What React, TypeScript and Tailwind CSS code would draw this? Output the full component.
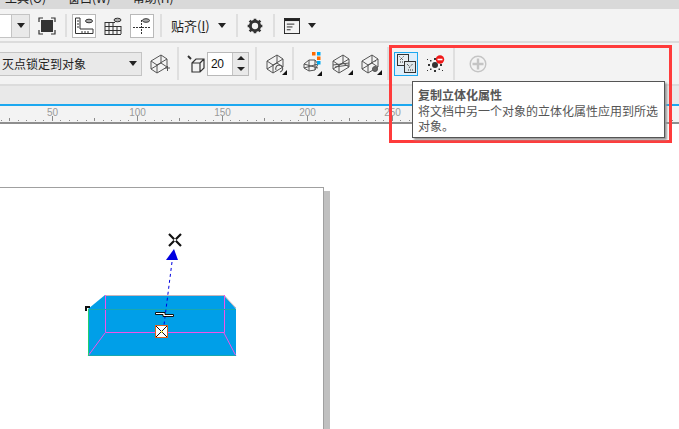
const font = { fontFamily: '"Noto Sans CJK SC", "Liberation Sans", sans-serif' };

function Sep({ tall }: { tall?: boolean }) {
  return <div className={`${tall ? 'h-[33px]' : 'h-[23px]'} w-[2px] shrink-0 bg-[#dfdfdf]`} />;
}

function Arrow({ className = '' }: { className?: string }) {
  return <div className={`h-0 w-0 border-x-[4px] border-t-[5px] border-x-transparent border-t-[#222] ${className}`} />;
}

function Cube({ corner, children }: { corner?: boolean; children?: React.ReactNode }) {
  return (
    <svg width="22" height="24" viewBox="0 0 22 24" className="shrink-0" fill="none" stroke="#555" strokeWidth="1">
      <path d="M1 9 L11 3 L17 7 L17 15 L7 21 L1 17 Z M1 9 L7 13 L17 7 M7 13 L7 21 M1 17 L11 11 L17 15 M11 3 L11 11" />
      {children}
      {corner && <path d="M21 18 L21 23 L16 23 Z" fill="#111" stroke="none" />}
    </svg>
  );
}

function Toolbar1() {
  return (
    <div className="flex h-[34px] items-center border-b-2 border-[#dcdcdc] bg-[#f3f3f3] pt-[1px]">
      <div className="flex h-[24px] w-[30px] shrink-0 border border-l-0 border-[#c4c4c4]">
        <div className="w-[11px] bg-white" />
        <div className="flex flex-1 items-center justify-center border-l border-[#c4c4c4] bg-[#e9e9e9]">
          <Arrow />
        </div>
      </div>
      <svg width="18" height="18" viewBox="0 0 18 18" className="ml-[8px] shrink-0" fill="none" stroke="#333" strokeWidth="1.2">
        <rect x="3" y="3" width="12" height="12" fill="#333" stroke="none" />
        <path d="M1 5 V1 H5 M13 1 H17 V5 M17 13 V17 H13 M5 17 H1 V13" />
      </svg>
      <div className="ml-[9px]"><Sep /></div>
      <div className="ml-[5px] flex h-[24px] w-[24px] shrink-0 items-center justify-center border border-[#b9b9b9] bg-white">
        <svg width="20" height="18" viewBox="0 0 20 18" fill="none" stroke="#333">
          <path d="M1.5 1 V16.5 H19 V12 H6 V1 Z" />
          <path d="M3 4 H5 M3 7 H5 M3 10 H5 M8 14 V16 M11 14 V16 M14 14 V16" />
          <ellipse cx="15" cy="4" rx="3.5" ry="1.8" fill="#aaa" />
        </svg>
      </div>
      <svg width="18" height="18" viewBox="0 0 18 18" className="ml-[8px] shrink-0" fill="none" stroke="#333">
        <path d="M1 5.5 H11 M1 9.5 H17 M1 13.5 H17 M0.5 17.5 H17 M1 5 V17 M5 5 V17 M9 5 V17 M13 9 V17 M17 9 V17" />
        <ellipse cx="13.5" cy="3" rx="3.5" ry="1.8" fill="#aaa" />
      </svg>
      <div className="ml-[8px] flex h-[24px] w-[24px] shrink-0 items-center justify-center border border-[#b9b9b9] bg-white">
        <svg width="20" height="18" viewBox="0 0 20 18" fill="none" stroke="#333" strokeDasharray="2 1">
          <path d="M1 10.5 H18 M9.5 3 V18" />
          <ellipse cx="14" cy="3.5" rx="3.5" ry="1.8" fill="#aaa" strokeDasharray="none" />
        </svg>
      </div>
      <div className="ml-[6px]"><Sep /></div>
      <span className="ml-[9px] w-[42px] shrink-0 text-[13px] leading-none text-[#222]">
        贴齐(<span className="underline">I</span>)
      </span>
      <Arrow className="ml-[5px] shrink-0" />
      <div className="ml-[10px]"><Sep /></div>
      <svg width="16" height="18" viewBox="0 0 24 26" className="ml-[9px] shrink-0" fill="none" stroke="#333" strokeWidth="4.5">
        <circle cx="12" cy="13" r="7" />
        <path d="M12 2 V6 M12 20 V24 M1 13 H5 M19 13 H23 M4 5 L7 8 M17 18 L20 21 M20 5 L17 8 M7 18 L4 21" strokeWidth="4" />
      </svg>
      <div className="ml-[10px]"><Sep /></div>
      <svg width="16" height="16" viewBox="0 0 17 17" className="ml-[9px] shrink-0" fill="none" stroke="#222">
        <rect x="0.5" y="0.5" width="16" height="16" />
        <path d="M1 2 H16" strokeWidth="2.5" />
        <path d="M3 6.5 H11 M3 9.5 H9 M3 12.5 H7" />
      </svg>
      <Arrow className="ml-[8px] shrink-0" />
    </div>
  );
}

function Toolbar2() {
  return (
    <div className="flex h-[43px] items-center border-b-2 border-[#dcdcdc] bg-[#f3f3f3]">
      <div className="flex h-[24px] w-[142px] shrink-0 items-center justify-between border border-l-0 border-[#c4c4c4] bg-[#e9e9e9] pl-[2px] pr-[4px]">
        <span className="text-[12px] leading-none text-[#222]">灭点锁定到对象</span>
        <Arrow />
      </div>
      <div className="ml-[8px]">
        <Cube>
          <path d="M15 16 H20 M17.5 14 V19" strokeWidth="1" />
        </Cube>
      </div>
      <div className="ml-[5px]"><Sep tall /></div>
      <svg width="18" height="20" viewBox="0 0 18 20" className="ml-[8px] shrink-0" fill="none" stroke="#333" strokeWidth="1.2">
        <path d="M5 9 L9 5 H17 V14 L13 18 H5 Z M5 9 H13 V18 M13 9 L17 5" />
        <path d="M1 2 L4 5" strokeWidth="2" />
      </svg>
      <div className="ml-[2px] flex h-[24px] w-[42px] shrink-0 border border-[#b9b9b9]">
        <div
          className="flex w-[24px] items-center bg-white pl-[3px] text-[12px] leading-none tracking-[-0.5px] text-[#111]"
          style={{ fontFamily: '"Liberation Sans", sans-serif' }}
        >
          20
        </div>
        <div className="flex flex-1 flex-col items-center justify-center gap-[7px] border-l border-[#c4c4c4] bg-[#e9e9e9]">
          <div className="h-0 w-0 border-x-[4px] border-b-[4px] border-x-transparent border-b-[#222]" />
          <div className="h-0 w-0 border-x-[4px] border-t-[4px] border-x-transparent border-t-[#222]" />
        </div>
      </div>
      <div className="ml-[6px]"><Sep tall /></div>
      <div className="ml-[9px]">
        <Cube corner>
          <path d="M10 18 A3.5 3.5 0 1 1 14 20" strokeWidth="1.1" />
        </Cube>
      </div>
      <div className="ml-[4px]"><Sep tall /></div>
      <svg width="24" height="25" viewBox="0 0 24 25" className="ml-[8px] shrink-0" fill="none" stroke="#555" strokeWidth="1">
        <path d="M2 13 L7 9 L13 9 L16 13 L13 19 L7 20 L2 17 Z M2 13 L16 17 M7 9 L7 20 M13 9 L13 19 M2 17 L16 13" />
        <rect x="10" y="1" width="3.5" height="3.5" fill="#ff6a00" stroke="none" />
        <rect x="15" y="1" width="3.5" height="3.5" fill="#00a9f0" stroke="none" />
        <rect x="15" y="5.5" width="3.5" height="3.5" fill="#ff6a00" stroke="none" />
        <rect x="15" y="10" width="3.5" height="3.5" fill="#00a9f0" stroke="none" />
        <path d="M20 20 L20 25 L15 25 Z" fill="#111" stroke="none" />
      </svg>
      <div className="ml-[6px]">
        <Cube corner>
          <path d="M1 13 L17 11 M3 15 L17 13" strokeWidth="1" />
        </Cube>
      </div>
      <div className="ml-[7px]">
        <Cube corner>
          <circle cx="14" cy="17" r="2.5" fill="#666" />
          <path d="M11 10 V12 M14 9 V11" strokeDasharray="1 1" />
        </Cube>
      </div>
      <div className="ml-[4px]"><Sep tall /></div>
      <div className="ml-[5px] flex h-[24px] w-[24px] shrink-0 items-center justify-center border border-[#1ca8f0] bg-[#ddeefb]">
        <svg width="19" height="19" viewBox="0 0 19 19" fill="none" stroke="#333">
          <rect x="0.5" y="0.5" width="11" height="11" fill="#e8eef2" />
          <rect x="7.5" y="7.5" width="11" height="11" fill="#dfe6ea" />
          <path d="M2.5 2.5 L6 6 M6.5 2.5 L3 6 M3 8 H6 M10 10 L13 13 M15.5 10 L12 14 M11 16 H16" strokeDasharray="1 1" />
        </svg>
      </div>
      <svg width="18" height="18" viewBox="0 0 18 18" className="ml-[9px] shrink-0">
        <g fill="#333">
          <circle cx="8" cy="10" r="3" />
          <rect x="7" y="3" width="2" height="2" />
          <rect x="7" y="15" width="2" height="2" />
          <rect x="1" y="9" width="2" height="2" />
          <rect x="13" y="9" width="2" height="2" />
          <rect x="3" y="5" width="1.5" height="1.5" />
          <rect x="3" y="13.5" width="1.5" height="1.5" />
          <rect x="11.5" y="13.5" width="1.5" height="1.5" />
          <rect x="0" y="4" width="1" height="1" />
          <rect x="0" y="15" width="1" height="1" />
          <rect x="15" y="15" width="1" height="1" />
        </g>
        <circle cx="13" cy="4.5" r="4.2" fill="#f01818" />
        <rect x="10.5" y="3.7" width="5" height="1.6" fill="#fff" />
      </svg>
      <div className="ml-[8px]"><Sep tall /></div>
      <svg width="18" height="18" viewBox="0 0 18 18" className="ml-[14px] shrink-0" fill="none" stroke="#c4c4c4">
        <circle cx="9" cy="9" r="7.8" strokeWidth="1.4" />
        <path d="M9 3.5 V14.5 M3.5 9 H14.5" strokeWidth="2.4" />
      </svg>
    </div>
  );
}

function Ruler() {
  // one tick every 8.5px, a long one every 50 units
  const ticks = Array.from({ length: 80 }, (_, i) => i);
  const labels = ['50', '100', '150', '200', '250'];
  return (
    <div className="relative h-[18px] border-b-2 border-[#8e8e8e] bg-[#f3f3f3]">
      <div className="flex pl-[10px] pt-[1px]">
        {labels.map((l) => (
          <span
            key={l}
            className="w-[85px] shrink-0 text-center text-[10px] leading-[11px] text-[#999]"
            style={{ fontFamily: '"Liberation Sans", sans-serif' }}
          >
            {l}
          </span>
        ))}
      </div>
      <svg width="679" height="6" className="absolute bottom-0 left-0">
        {ticks.map((i) => {
          const h = i % 10 === 6 ? 5 : i % 5 === 1 ? 3 : 1;
          return <rect key={i} x={Math.round(i * 8.5 + 0.5)} y={5 - h} width="1" height={h} fill="#8a8a8a" />;
        })}
      </svg>
    </div>
  );
}

function ExtrudeObject() {
  return (
    <svg width="160" height="135" viewBox="0 0 160 135" className="absolute left-[82px] top-[230px]">
      <path d="M6 79 L23 65 H142 L154 79 V126 H6 Z" fill="#009fe8" />
      <path d="M23 65.5 H142 L154 78" fill="none" stroke="#c8b4bc" strokeWidth="1" />
      <path d="M23.5 65 V102.5 H142.5 V65 M23 103 L6 126 M142 103 L154 126" fill="none" stroke="#f452e6" strokeWidth="1" />
      <path d="M6 79.5 H154 M6 125.5 H154" fill="none" stroke="#18a8b0" strokeWidth="1" />
      <path d="M6.5 79 V126" stroke="#1fd070" strokeWidth="1" />
      <rect x="3" y="76" width="5" height="2" fill="#111" />
      <rect x="3" y="76" width="2" height="5" fill="#111" />
      <path d="M90 32 L82 95" stroke="#0000e0" strokeWidth="1" strokeDasharray="3 3" fill="none" />
      <path d="M92 19 L84 30 H96 Z" fill="#0000e0" />
      <path d="M87 4 L92.2 9.2 M99 4 L93.8 9.2 M87 16 L92.2 10.8 M99 16 L93.8 10.8" stroke="#111" strokeWidth="2.2" />
      <path d="M73.5 82.5 H83 V84.5 H91.5 V86.5 H81 V84.5 H73.5 Z" fill="#fff" stroke="#111" />
      <rect x="73.5" y="95.5" width="12" height="12" fill="#fff" stroke="#e0601c" />
      <path d="M74 96 L85 107 M85 96 L74 107" stroke="#111" strokeWidth="1" />
      <rect x="79" y="101" width="1.5" height="1.5" fill="#f0e000" />
    </svg>
  );
}

export default function App() {
  return (
    <div className="relative h-[429px] w-[679px] overflow-hidden bg-white" style={font}>
      <div className="flex h-[9px] items-start gap-[22px] overflow-hidden bg-[#d9d9d9] pl-[5px]">
        <span className="-mt-[9px] shrink-0 text-[12px] leading-[14px] text-[#222]">工具(O)</span>
        <span className="-mt-[9px] shrink-0 text-[12px] leading-[14px] text-[#222]">窗口(W)</span>
        <span className="-mt-[9px] shrink-0 text-[12px] leading-[14px] text-[#222]">帮助(H)</span>
      </div>
      <Toolbar1 />
      <Toolbar2 />
      <div className="h-[20px] border-b-2 border-[#1ca8f0] bg-[#e9e9e9]" />
      <Ruler />

      {/* page on the canvas */}
      <div className="absolute left-[-10px] top-[187px] h-[260px] w-[334px] border border-[#a0a0a0] bg-white shadow-[6px_4px_0_0_#c0c0c0]" />
      <ExtrudeObject />

      {/* red annotation round the tooltip */}
      <div className="absolute left-[389px] top-[45px] h-[98px] w-[283px] border-[3px] border-[#ff3b3b]" />
      <div className="absolute left-[412px] top-[81px] h-[57px] w-[253px] border border-[#555] bg-white px-[5px] pt-[4px] shadow-[2px_2px_2px_#999]">
        <p className="text-[12px] font-bold leading-[17px] text-[#555]">复制立体化属性</p>
        <p className="text-[12px] leading-[15px] text-[#555]">将文档中另一个对象的立体化属性应用到所选对象。</p>
      </div>
    </div>
  );
}
